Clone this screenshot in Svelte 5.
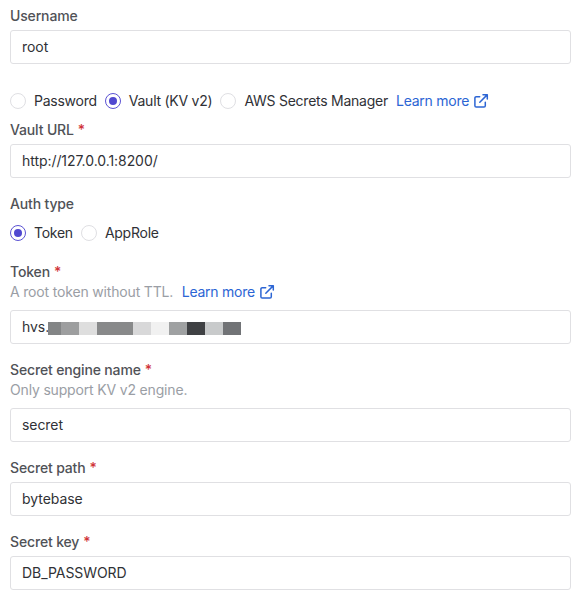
<script>
  let credential = $state('vault');
  let auth = $state('token');
  const credentials = [
    ['password', 'Password'],
    ['vault', 'Vault (KV v2)'],
    ['aws', 'AWS Secrets Manager']
  ];
  const authTypes = [
    ['token', 'Token'],
    ['approle', 'AppRole']
  ];
  const mask = [
    [13, '#838586'], [18, '#9d9e9f'], [18, '#dedede'], [36, '#88898a'],
    [18, '#d8d8d9'], [18, '#f1f1f1'], [18, '#9fa1a2'], [18, '#3f4144'],
    [18, '#c8cacb'], [18, '#717376']
  ];
</script>

{#snippet radios(items, current, pick)}
  {#each items as [id, text]}
    <button class="radio" type="button" onclick={() => pick(id)}>
      <span class="dot" class:on={current === id}></span>
      <span>{text}</span>
    </button>
  {/each}
{/snippet}

{#snippet learnMore()}
  <span class="link">
    <span>Learn more</span>
    <svg viewBox="0 0 16 16" width="16" height="16" fill="none" stroke="currentColor" stroke-width="1.5" stroke-linecap="round" stroke-linejoin="round">
      <path d="M6.7 3.7H3.2a1.3 1.3 0 0 0-1.3 1.3V12.8a1.3 1.3 0 0 0 1.3 1.3h7.8a1.3 1.3 0 0 0 1.3-1.3V9.3M10 1.7h4.3V6M14.1 1.9 6.8 9.2" />
    </svg>
  </span>
{/snippet}

{#snippet label(text, required)}
  <div class="label">{text}{#if required}<span class="star">*</span>{/if}</div>
{/snippet}

<form class="form">
  <section>
    {@render label('Username', false)}
    <div class="input">root</div>
  </section>

  <div class="row first">
    {@render radios(credentials, credential, (id) => (credential = id))}
    {@render learnMore()}
  </div>

  <section>
    {@render label('Vault URL', true)}
    <div class="input">http://127.0.0.1:8200/</div>
  </section>

  <section class="next">
    {@render label('Auth type', false)}
    <div class="row auth">
      {@render radios(authTypes, auth, (id) => (auth = id))}
    </div>
  </section>

  <section class="token">
    {@render label('Token', true)}
    <div class="hint">A root token without TTL. {@render learnMore()}</div>
    <div class="input wide">
      <span class="prefix">hvs.</span>
      <span class="mask">
        {#each mask as [width, color]}
          <i style="width:{width}px;background:{color}"></i>
        {/each}
      </span>
    </div>
  </section>

  <section class="next">
    {@render label('Secret engine name', true)}
    <div class="hint">Only support KV v2 engine.</div>
    <div class="input wide">secret</div>
  </section>

  <section class="next">
    {@render label('Secret path', true)}
    <div class="input">bytebase</div>
  </section>

  <section class="next">
    {@render label('Secret key', true)}
    <div class="input">DB_PASSWORD</div>
  </section>
</form>

<style>
  :global(body) {
    background: #fff;
  }
  .form {
    box-sizing: border-box;
    height: 600px;
    padding: 6px 11px 0 10px;
    font: 14px/20px Inter, 'Liberation Sans', sans-serif;
    color: #303136;
  }
  .label {
    height: 20px;
    font-weight: 500;
    letter-spacing: -0.15px;
    color: #505257;
  }
  .star {
    margin-left: 4px;
    color: #d03338;
  }
  .input {
    box-sizing: border-box;
    display: flex;
    align-items: center;
    height: 34px;
    margin-top: 4px;
    padding: 0 11px;
    border: 1px solid #e0e0e3;
    border-radius: 3px;
    letter-spacing: -0.06px;
  }
  .wide {
    margin-top: 8px;
  }
  .row {
    display: flex;
    align-items: center;
    height: 20px;
    gap: 8px;
  }
  .first {
    margin: 27px 0 9px;
  }
  .auth {
    margin-top: 9px;
  }
  .next {
    margin-top: 16px;
  }
  .token {
    margin-top: 19px;
  }
  .radio {
    display: flex;
    align-items: center;
    gap: 8px;
    padding: 0;
    border: 0;
    background: none;
    font: inherit;
    letter-spacing: -0.25px;
    color: inherit;
    white-space: nowrap;
  }
  .dot {
    box-sizing: border-box;
    display: grid;
    place-items: center;
    width: 16px;
    height: 16px;
    border: 1px solid #dfdfe3;
    border-radius: 50%;
  }
  .on {
    border-color: #5b52d3;
  }
  .on::after {
    content: '';
    width: 8px;
    height: 8px;
    border-radius: 50%;
    background: #5048d0;
  }
  .hint {
    display: flex;
    align-items: center;
    gap: 8.5px;
    height: 20px;
    letter-spacing: -0.17px;
    color: #9a9ea5;
  }
  .link {
    display: flex;
    align-items: center;
    gap: 4px;
    letter-spacing: -0.24px;
    color: #2c65d4;
    white-space: nowrap;
  }
  .prefix {
    width: 26.3px;
  }
  .mask {
    display: flex;
    height: 13px;
    margin-top: 2px;
  }
  .mask i {
    display: block;
  }
</style>
